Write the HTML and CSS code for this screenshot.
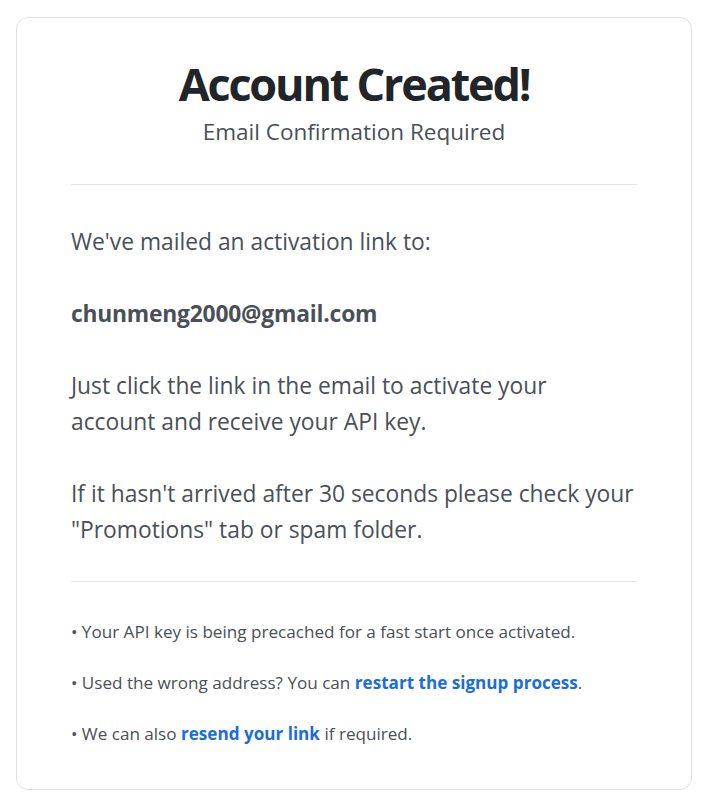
FILE: index.html
```html
<!DOCTYPE html>
<html>
<head>
<meta charset="utf-8">
<link rel="stylesheet" href="styles.css">
</head>
<body>
<div class="card">
  <header class="head">
    <h1 class="title">Account Created!</h1>
    <p class="subtitle">Email Confirmation Required</p>
  </header>
  <hr class="rule rule-top">
  <section class="main">
    <p>We've mailed an activation link to:</p>
    <p class="email">chunmeng2000@gmail.com</p>
    <p>Just click the link in the email to activate your<br>account and receive your API key.</p>
    <p>If it hasn't arrived after 30 seconds please check your "Promotions" tab or spam folder.</p>
  </section>
  <hr class="rule rule-mid">
  <section class="notes">
    <p>• Your API key is being precached for a fast start once activated.</p>
    <p>• Used the wrong address? You can <a href="#">restart the signup process</a>.</p>
    <p>• We can also <a href="#">resend your link</a> if required.</p>
  </section>
</div>
</body>
</html>
```
FILE: styles.css
```css
* { box-sizing: border-box; }
html, body { margin: 0; padding: 0; background: #fff; }
body {
  font-family: "Open Sans", "Noto Sans", sans-serif;
  color: #495057;
  padding: 17px 16px 11px;
}
.card {
  border: 1px solid #dee2e6;
  border-radius: 12px;
  padding: 38px 54px 43px;
  display: flex;
  flex-direction: column;
}
.head { text-align: center; }
.title {
  margin: 0;
  font-size: 45px;
  font-weight: 700;
  line-height: 56px;
  color: #212529;
  letter-spacing: -2.2px;
}
.subtitle {
  margin: 4px 0 0;
  font-size: 22.5px;
  line-height: 32px;
  color: #495057;
}
.rule {
  border: 0;
  border-top: 1px solid #e3e5e8;
  width: 100%;
  margin: 0;
}
.rule-top { margin-top: 36px; }
.rule-mid { margin-top: 33px; }
.main { padding-top: 39px; }
.main p {
  margin: 0 0 36px;
  font-size: 22.8px;
  line-height: 36px;
}
.main p:last-child { margin-bottom: 0; }
.main .email { font-weight: 700; letter-spacing: -0.2px; }
.notes { padding-top: 38px; }
.notes p {
  margin: 0 0 27px;
  font-size: 17.1px;
  line-height: 24px;
}
.notes p:last-child { margin-bottom: 0; }
.notes a {
  color: #1a6ddb;
  font-weight: 700;
  text-decoration: none;
}
```
